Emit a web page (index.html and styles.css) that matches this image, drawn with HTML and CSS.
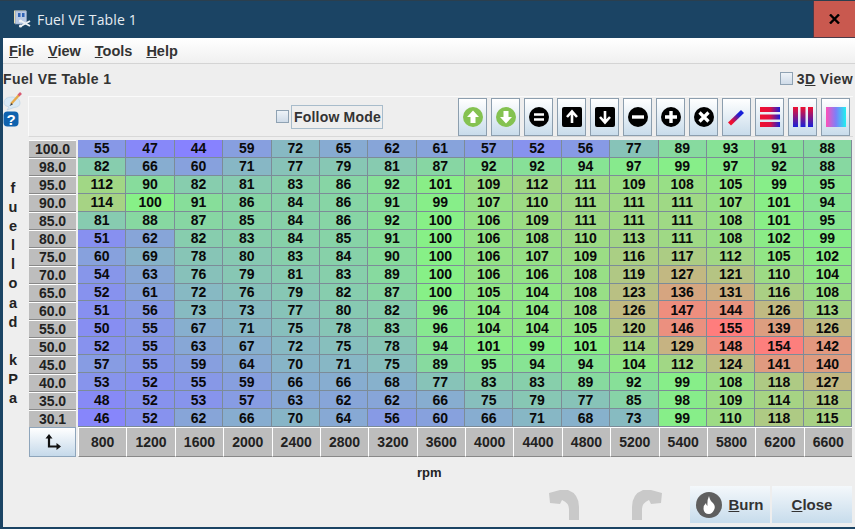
FILE: index.html
```html
<!DOCTYPE html>
<html lang="en">
<head>
  <meta charset="UTF-8">
  <title>Fuel VE Table 1</title>
  <link rel="stylesheet" href="styles.css">
</head>
<body>
  <div class="titlebar">
    <div class="title-left">
      <svg class="app-icon" width="19" height="19" viewBox="0 0 19 19">
        <rect x="1" y="0.5" width="12" height="13" fill="#e9dcae"/>
        <rect x="2.5" y="1" width="11" height="13" fill="#b9c9e4" stroke="#8ea2c4" stroke-width="0.6"/>
        <rect x="5" y="3" width="2.5" height="4" fill="#2f63b5"/>
        <rect x="9" y="3" width="2.5" height="4" fill="#2f63b5"/>
        <path d="M8 11 L17 16 M8 16 L17 11" stroke="#eef1f4" stroke-width="2"/>
        <circle cx="7.5" cy="11" r="1.6" fill="#eef1f4"/>
        <circle cx="7.5" cy="16" r="1.6" fill="#eef1f4"/>
      </svg>
      <span class="title-text">Fuel VE Table 1</span>
    </div>
    <div class="close-x">
      <svg width="11" height="10" viewBox="0 0 11 10"><path d="M1 0.5 L10 9.5 M10 0.5 L1 9.5" stroke="#000" stroke-width="2.4"/></svg>
    </div>
  </div>

  <div class="window">
    <div class="menubar">
      <span><u>F</u>ile</span>
      <span><u>V</u>iew</span>
      <span><u>T</u>ools</span>
      <span><u>H</u>elp</span>
    </div>

    <div class="heading">
      <span class="heading-title">Fuel VE Table 1</span>
      <label class="check-label"><i class="check"></i><span>3<u>D</u> View</span></label>
    </div>

    <div class="main">
      <div class="side">
        <svg width="20" height="19" viewBox="0 0 20 19">
          <path d="M1 11 Q1 5 9 5 Q17 5 17 11 Q17 15 11 15.5 L4 18 L6 15 Q1 14 1 11Z" fill="#d8e9f6" stroke="#bdd3e4" stroke-width="0.7"/>
          <path d="M8 12 L16 3" stroke="#e6a94a" stroke-width="2.4"/>
          <path d="M15.5 3.5 L18 1" stroke="#d95a72" stroke-width="2.6"/>
          <path d="M8.5 11 L6.5 14 L9.8 12.6Z" fill="#444"/>
        </svg>
        <svg width="16" height="16" viewBox="0 0 16 16">
          <rect x="0.5" y="0.5" width="15" height="15" rx="4" fill="#0f62ae"/>
          <text x="8" y="13.5" class="help-mark">?</text>
        </svg>
      </div>

      <div class="content">
        <div class="toolbar">
          <label class="follow"><i class="check"></i><span class="follow-text">Follow Mode</span></label>
          <div class="tools">
            <button class="tool"><svg width="20" height="20" viewBox="0 0 20 20"><circle cx="10" cy="10" r="10" fill="#84c251"/><path d="M10 3.5 L16 10 H12.5 V16 H7.5 V10 H4Z" fill="#fff"/></svg></button>
            <button class="tool"><svg width="20" height="20" viewBox="0 0 20 20"><circle cx="10" cy="10" r="10" fill="#84c251"/><path d="M10 16.5 L16 10 H12.5 V4 H7.5 V10 H4Z" fill="#fff"/></svg></button>
            <button class="tool"><svg width="20" height="20" viewBox="0 0 20 20"><circle cx="10" cy="10" r="10" fill="#000"/><path d="M5 7.5 H15 M5 12.5 H15" stroke="#fff" stroke-width="2.6"/></svg></button>
            <button class="tool"><svg width="20" height="20" viewBox="0 0 20 20"><rect width="20" height="20" rx="2" fill="#000"/><path d="M10 16 V5 M5 10 L10 4.5 L15 10" fill="none" stroke="#fff" stroke-width="2.6"/></svg></button>
            <button class="tool"><svg width="20" height="20" viewBox="0 0 20 20"><rect width="20" height="20" rx="2" fill="#000"/><path d="M10 4 V15 M5 10 L10 15.5 L15 10" fill="none" stroke="#fff" stroke-width="2.6"/></svg></button>
            <button class="tool"><svg width="20" height="20" viewBox="0 0 20 20"><circle cx="10" cy="10" r="10" fill="#000"/><path d="M4 10 H16" stroke="#fff" stroke-width="3.4"/></svg></button>
            <button class="tool"><svg width="20" height="20" viewBox="0 0 20 20"><circle cx="10" cy="10" r="10" fill="#000"/><path d="M4 10 H16 M10 4 V16" stroke="#fff" stroke-width="3.4"/></svg></button>
            <button class="tool"><svg width="20" height="20" viewBox="0 0 20 20"><circle cx="10" cy="10" r="10" fill="#000"/><path d="M5.5 5.5 L14.5 14.5 M14.5 5.5 L5.5 14.5" stroke="#fff" stroke-width="3.2"/></svg></button>
            <button class="tool"><svg width="20" height="20" viewBox="0 0 20 20"><defs><linearGradient id="slash" x1="0" y1="1" x2="1" y2="0"><stop offset="0.25" stop-color="#f01030"/><stop offset="0.7" stop-color="#1820d8"/></linearGradient></defs><path d="M1 15.5 L4 18.5 L17 6 L14 3Z" fill="url(#slash)"/></svg></button>
            <button class="tool"><svg width="20" height="20" viewBox="0 0 20 20"><defs><linearGradient id="rows" x1="0" y1="0" x2="1" y2="0"><stop offset="0" stop-color="#f01030"/><stop offset="0.5" stop-color="#e01040"/><stop offset="1" stop-color="#1820d8"/></linearGradient></defs><path d="M0 0 H20 V5 H0Z M0 7.5 H20 V12.5 H0Z M0 15 H20 V20 H0Z" fill="url(#rows)"/></svg></button>
            <button class="tool"><svg width="20" height="20" viewBox="0 0 20 20"><defs><linearGradient id="cols" x1="0" y1="0" x2="0" y2="1"><stop offset="0" stop-color="#f01030"/><stop offset="1" stop-color="#1820d8"/></linearGradient></defs><path d="M0 0 H5 V20 H0Z M7.5 0 H12.5 V20 H7.5Z M15 0 H20 V20 H15Z" fill="url(#cols)"/></svg></button>
            <button class="tool"><svg width="20" height="20" viewBox="0 0 20 20"><defs><linearGradient id="blend" x1="0" y1="0" x2="1" y2="0"><stop offset="0" stop-color="#ff50b8"/><stop offset="0.5" stop-color="#7c80f8"/><stop offset="1" stop-color="#20f0f0"/></linearGradient></defs><rect width="20" height="20" fill="url(#blend)"/></svg></button>
          </div>
        </div>

        <div class="table-area">
          <div class="yaxis" id="yaxis"></div>
          <div class="labels" id="labels"></div>
          <div class="cells" id="cells"></div>
          <button class="corner"><svg width="16" height="16" viewBox="0 0 16 16"><path d="M4 2 V12.5 H14" fill="none" stroke="#111" stroke-width="2.2"/><path d="M0.5 4.5 L4 0 L7.5 4.5Z M11.5 9 L16 12.5 L11.5 16Z" fill="#111"/></svg></button>
          <div class="xaxis" id="xaxis"></div>
        </div>

        <div class="rpm">rpm</div>
      </div>
    </div>

    <div class="footer">
      <svg class="undo" width="32" height="32" viewBox="0 0 32 32"><path d="M1 4 L12 1 H20 Q31 5 31 18 V31 H21 V20 Q21 14 14 11 L12 15 L2 14Z" fill="#c9c9c9"/></svg>
      <svg class="redo" width="32" height="32" viewBox="0 0 32 32"><path d="M31 4 L20 1 H12 Q1 5 1 18 V31 H11 V20 Q11 14 18 11 L20 15 L30 14Z" fill="#c9c9c9"/></svg>
      <button class="action">
        <svg width="26" height="26" viewBox="0 0 26 26"><circle cx="13" cy="13" r="13" fill="#5f5f5f"/><path d="M13 4 Q14 9 17 11 Q20 14 18 18 Q16 22 13 22 Q8 22 7.5 17 Q7.5 13 10 11 Q10 13 11.5 14 Q11 8 13 4Z" fill="#fff"/></svg>
        <span><u>B</u>urn</span>
      </button>
      <button class="action"><span><u>C</u>lose</span></button>
    </div>
  </div>
  <script src="table.js"></script>
</body>
</html>
```

FILE: styles.css
```css
* {
  box-sizing: border-box;
}

body {
  margin: 0;
  width: 855px;
  height: 529px;
  overflow: hidden;
  background-color: #1b4464;
  font-family: "Liberation Sans", Arial, sans-serif;
  color: #222;
}

.titlebar {
  display: flex;
  justify-content: space-between;
  height: 38px;
  border-top: 1px solid #2b3f4e;
}

.title-left {
  display: flex;
  align-items: center;
  gap: 5px;
  padding-left: 13px;
  color: #e6ecf2;
  font-family: "Open Sans", sans-serif;
  font-size: 14px;
  letter-spacing: 0.15px;
}

.close-x {
  display: flex;
  align-items: center;
  justify-content: center;
  width: 42px;
  background-color: #c9594f;
  border-left: 1px solid #4a3a48;
  border-bottom: 1px solid #4a3a48;
}

.window {
  display: flex;
  flex-direction: column;
  height: 489px;
  margin-left: 3px;
  background-color: #eeeeee;
}

.menubar {
  display: flex;
  gap: 14px;
  align-items: center;
  height: 26px;
  padding-left: 6px;
  background: linear-gradient(#ffffff, #f0f0f0);
  border-bottom: 1px solid #d4d4d4;
  font-size: 14.5px;
  font-weight: bold;
  color: #333;
}

.heading {
  display: flex;
  justify-content: space-between;
  align-items: center;
  height: 29px;
  padding-right: 2px;
  font-size: 14px;
  font-weight: bold;
  letter-spacing: 0.4px;
  color: #333;
}

.check {
  display: inline-block;
  width: 13px;
  height: 13px;
  border: 1px solid #8fa2b3;
  background: linear-gradient(#eef3f8, #cfdbe8);
}

.check-label {
  display: flex;
  align-items: center;
  gap: 4px;
}

.main {
  display: flex;
  flex: 1;
}

.side {
  display: flex;
  flex-direction: column;
  width: 25px;
  margin-top: -1px;
}

.help-mark {
  font-family: "Liberation Sans", sans-serif;
  font-size: 15px;
  font-weight: bold;
  fill: #fff;
  text-anchor: middle;
}

.content {
  width: 825px;
}

.toolbar {
  display: flex;
  justify-content: space-between;
  align-items: center;
  height: 41px;
  margin-top: 3px;
  padding-right: 3px;
  border-top: 1px solid #fafafa;
  border-bottom: 1px solid #d8d8d8;
  border-left: 1px solid #fafafa;
}

.follow {
  display: flex;
  align-items: center;
  gap: 2px;
  margin-left: 247px;
  font-size: 14px;
  font-weight: bold;
  letter-spacing: 0.2px;
  color: #333;
}

.follow-text {
  padding: 3px 1px 3px 2px;
  border: 1px solid #a8bccb;
}

.tools {
  display: flex;
  gap: 4px;
}

.tool {
  display: flex;
  align-items: center;
  justify-content: center;
  width: 29px;
  height: 38px;
  padding: 0;
  border: 1px solid #8c9eae;
  background: linear-gradient(#ffffff, #c9dceb);
}

.table-area {
  display: grid;
  grid-template-columns: 26px 49px 774px;
  grid-template-rows: 287px 30px;
  margin-left: -25px;
  margin-top: 3px;
}

.yaxis {
  grid-row: 1 / 3;
  padding-top: 39px;
  padding-right: 6px;
  font-size: 14.5px;
  font-weight: bold;
  text-align: center;
}

.yaxis span {
  display: block;
  height: 19.1px;
  line-height: 19.1px;
}

.labels {
  display: grid;
  grid-template-rows: repeat(16, 1fr);
  margin-right: 2px;
}

.row-label {
  display: flex;
  align-items: center;
  justify-content: center;
  background-color: #bdbdbd;
  border-top: 1px solid #ffffff;
  border-bottom: 1px solid #888888;
  font-size: 14px;
  font-weight: bold;
}

.cells {
  display: grid;
  grid-template-columns: repeat(16, 1fr);
  grid-template-rows: repeat(16, 1fr);
}

.cell {
  display: flex;
  align-items: center;
  justify-content: center;
  border-right: 1px solid #7c8c98;
  border-bottom: 1px solid #7c8c98;
  font-size: 14px;
  font-weight: bold;
  color: #0a0a0a;
}

.corner {
  grid-column: 2;
  display: flex;
  align-items: center;
  justify-content: center;
  margin-right: 2px;
  padding: 0;
  border: 1px solid #8ea5bb;
  background: linear-gradient(#ffffff, #c5d9ea);
}

.xaxis {
  display: grid;
  grid-template-columns: repeat(16, 1fr);
}

.col-label {
  display: flex;
  align-items: center;
  justify-content: center;
  background-color: #bdbdbd;
  border-top: 1px solid #ffffff;
  border-left: 1px solid #ffffff;
  border-bottom: 1px solid #888888;
  font-size: 14px;
  font-weight: bold;
}

.rpm {
  margin-top: 8px;
  padding-left: 389px;
  font-size: 13px;
  font-weight: bold;
}

.footer {
  display: flex;
  align-items: center;
  height: 41px;
  margin-bottom: 2px;
  padding-right: 3px;
  justify-content: flex-end;
}

.undo {
  margin-right: 51px;
}

.redo {
  margin-right: 25px;
}

.action {
  display: flex;
  align-items: center;
  justify-content: center;
  gap: 6px;
  width: 80px;
  height: 37px;
  margin-left: 2px;
  padding: 0;
  border: 0;
  background: linear-gradient(#f4f8fb, #c7dcec);
  font-family: "Liberation Sans", sans-serif;
  font-size: 15px;
  font-weight: bold;
  color: #333;
}
```

FILE: table.js
```js
const rpm = [800, 1200, 1600, 2000, 2400, 2800, 3200, 3600, 4000, 4400, 4800, 5200, 5400, 5800, 6200, 6600];
const load = ['100.0', '98.0', '95.0', '90.0', '85.0', '80.0', '75.0', '70.0', '65.0', '60.0', '55.0', '50.0', '45.0', '40.0', '35.0', '30.1'];
const ve = [
  [55, 47, 44, 59, 72, 65, 62, 61, 57, 52, 56, 77, 89, 93, 91, 88],
  [82, 66, 60, 71, 77, 79, 81, 87, 92, 92, 94, 97, 99, 97, 92, 88],
  [112, 90, 82, 81, 83, 86, 92, 101, 109, 112, 111, 109, 108, 105, 99, 95],
  [114, 100, 91, 86, 84, 86, 91, 99, 107, 110, 111, 111, 111, 107, 101, 94],
  [81, 88, 87, 85, 84, 86, 92, 100, 106, 109, 111, 111, 111, 108, 101, 95],
  [51, 62, 82, 83, 84, 85, 91, 100, 106, 108, 110, 113, 111, 108, 102, 99],
  [60, 69, 78, 80, 83, 84, 90, 100, 106, 107, 109, 116, 117, 112, 105, 102],
  [54, 63, 76, 79, 81, 83, 89, 100, 106, 106, 108, 119, 127, 121, 110, 104],
  [52, 61, 72, 76, 79, 82, 87, 100, 105, 104, 108, 123, 136, 131, 116, 108],
  [51, 56, 73, 73, 77, 80, 82, 96, 104, 104, 108, 126, 147, 144, 126, 113],
  [50, 55, 67, 71, 75, 78, 83, 96, 104, 104, 105, 120, 146, 155, 139, 126],
  [52, 55, 63, 67, 72, 75, 78, 94, 101, 99, 101, 114, 129, 148, 154, 142],
  [57, 55, 59, 64, 70, 71, 75, 89, 95, 94, 94, 104, 112, 124, 141, 140],
  [53, 52, 55, 59, 66, 66, 68, 77, 83, 83, 89, 92, 99, 108, 118, 127],
  [48, 52, 53, 57, 63, 62, 62, 66, 75, 79, 77, 85, 98, 109, 114, 118],
  [46, 52, 62, 66, 70, 64, 56, 60, 66, 71, 68, 73, 99, 110, 118, 115]
];

// blue at the low end, green in the middle, red at the top
const cellColor = (v) => {
  const mix = (a, b, t) => a.map((c, i) => Math.round(c + (b[i] - c) * t));
  const blue = [135, 130, 255];
  const green = [135, 240, 135];
  const red = [255, 125, 125];
  const c = v < 100 ? mix(blue, green, Math.max(0, v - 44) / 56) : mix(green, red, (v - 100) / 55);
  return `rgb(${c[0]}, ${c[1]}, ${c[2]})`;
};

const add = (parent, className, text) => {
  const el = document.createElement('div');
  el.className = className;
  el.textContent = text;
  parent.appendChild(el);
  return el;
};

const labels = document.getElementById('labels');
load.forEach((l) => add(labels, 'row-label', l));

const cells = document.getElementById('cells');
ve.flat().forEach((v) => {
  add(cells, 'cell', v).style.backgroundColor = cellColor(v);
});

const xaxis = document.getElementById('xaxis');
rpm.forEach((r) => add(xaxis, 'col-label', r));

// the reference stacks these with no slot between the two words
const yaxis = document.getElementById('yaxis');
'fuelload kPa'.split('').forEach((ch) => {
  const s = document.createElement('span');
  s.textContent = ch === ' ' ? '\u00a0' : ch;
  yaxis.appendChild(s);
});
```
